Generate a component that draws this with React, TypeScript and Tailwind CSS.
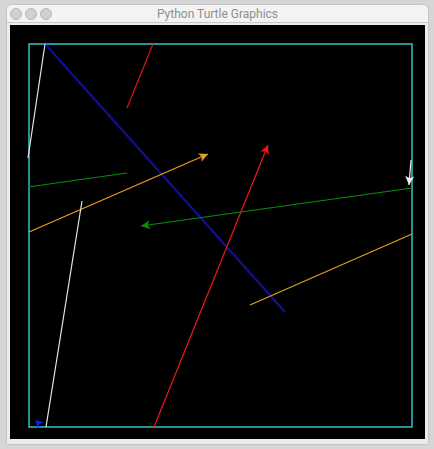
import React from 'react';

type Pt = [number, number];

// turtle "classic" arrow head, tip at `tip`, pointing away from `from`
const arrowHead = (from: Pt, tip: Pt, len = 9, half = 4.5) => {
  const dx = tip[0] - from[0];
  const dy = tip[1] - from[1];
  const d = Math.hypot(dx, dy);
  const ux = dx / d;
  const uy = dy / d;
  const px = -uy;
  const py = ux;
  const bx = tip[0] - ux * len;
  const by = tip[1] - uy * len;
  const nx = tip[0] - ux * len * 0.75;
  const ny = tip[1] - uy * len * 0.75;
  return [
    [tip[0], tip[1]],
    [bx + px * half, by + py * half],
    [nx, ny],
    [bx - px * half, by - py * half],
  ]
    .map((p) => p.join(','))
    .join(' ');
};

interface Seg {
  a: Pt;
  b: Pt;
  color: string;
  width?: number;
  arrow?: boolean;
}

const segments: Seg[] = [
  { a: [45, 44], b: [28, 158], color: '#e6e6e6' },
  { a: [46, 45], b: [285, 312], color: '#10109c', width: 2 },
  { a: [153, 44], b: [127, 108], color: '#e01010' },
  { a: [154, 427], b: [268, 145], color: '#f01818', arrow: true },
  { a: [29, 232], b: [208, 154], color: '#e8a020', arrow: true },
  { a: [250, 305], b: [412, 234], color: '#e0a020' },
  { a: [28, 187], b: [127, 173], color: '#0c8c0c' },
  { a: [412, 188], b: [141, 226], color: '#0c8c0c', arrow: true },
  { a: [82, 201], b: [46, 427], color: '#e6e6e6' },
  { a: [411, 160], b: [409, 185], color: '#f0f0f0', arrow: true },
];

const TrafficLight: React.FC = () => (
  <span className="w-[12px] h-[12px] rounded-full bg-[#d0d0d0] border border-[#b8b8b8]" />
);

export default function App() {
  return (
    <div className="w-[434px] h-[449px] bg-[#d6d6d6] pt-[5px] pl-[7px] overflow-hidden">
      <div className="w-[421px] h-[439px] bg-[#ececec] rounded-t-[5px] flex flex-col shadow-[0_0_2px_rgba(0,0,0,0.25)]">
        <div className="relative h-[18px] flex items-center px-[3px] gap-[3px] border-b border-[#c8c8c8] bg-[#f3f3f3] rounded-t-[5px]">
          <TrafficLight />
          <TrafficLight />
          <TrafficLight />
          <span
            className="absolute inset-0 flex items-center justify-center text-[12px] text-[#8e8e8e]"
            style={{ fontFamily: 'Roboto, "Liberation Sans", sans-serif' }}
          >
            Python Turtle Graphics
          </span>
        </div>
        <div className="pt-[2px] pl-[3px]">
          <svg
            width={415}
            height={414}
            viewBox="10 25 415 414"
            className="block bg-black"
          >
            <rect x={29} y={44} width={383} height={383} fill="none" stroke="#30c4c4" strokeWidth={1.5} />
            {segments.map((s, i) => (
              <g key={i}>
                <line
                  x1={s.a[0]}
                  y1={s.a[1]}
                  x2={s.b[0]}
                  y2={s.b[1]}
                  stroke={s.color}
                  strokeWidth={s.width ?? 1.2}
                />
                {s.arrow && <polygon points={arrowHead(s.a, s.b)} fill={s.color} />}
              </g>
            ))}
            <polygon points={arrowHead([43, 427], [35, 420], 8, 4)} fill="#1a1aff" />
          </svg>
        </div>
      </div>
    </div>
  );
}
